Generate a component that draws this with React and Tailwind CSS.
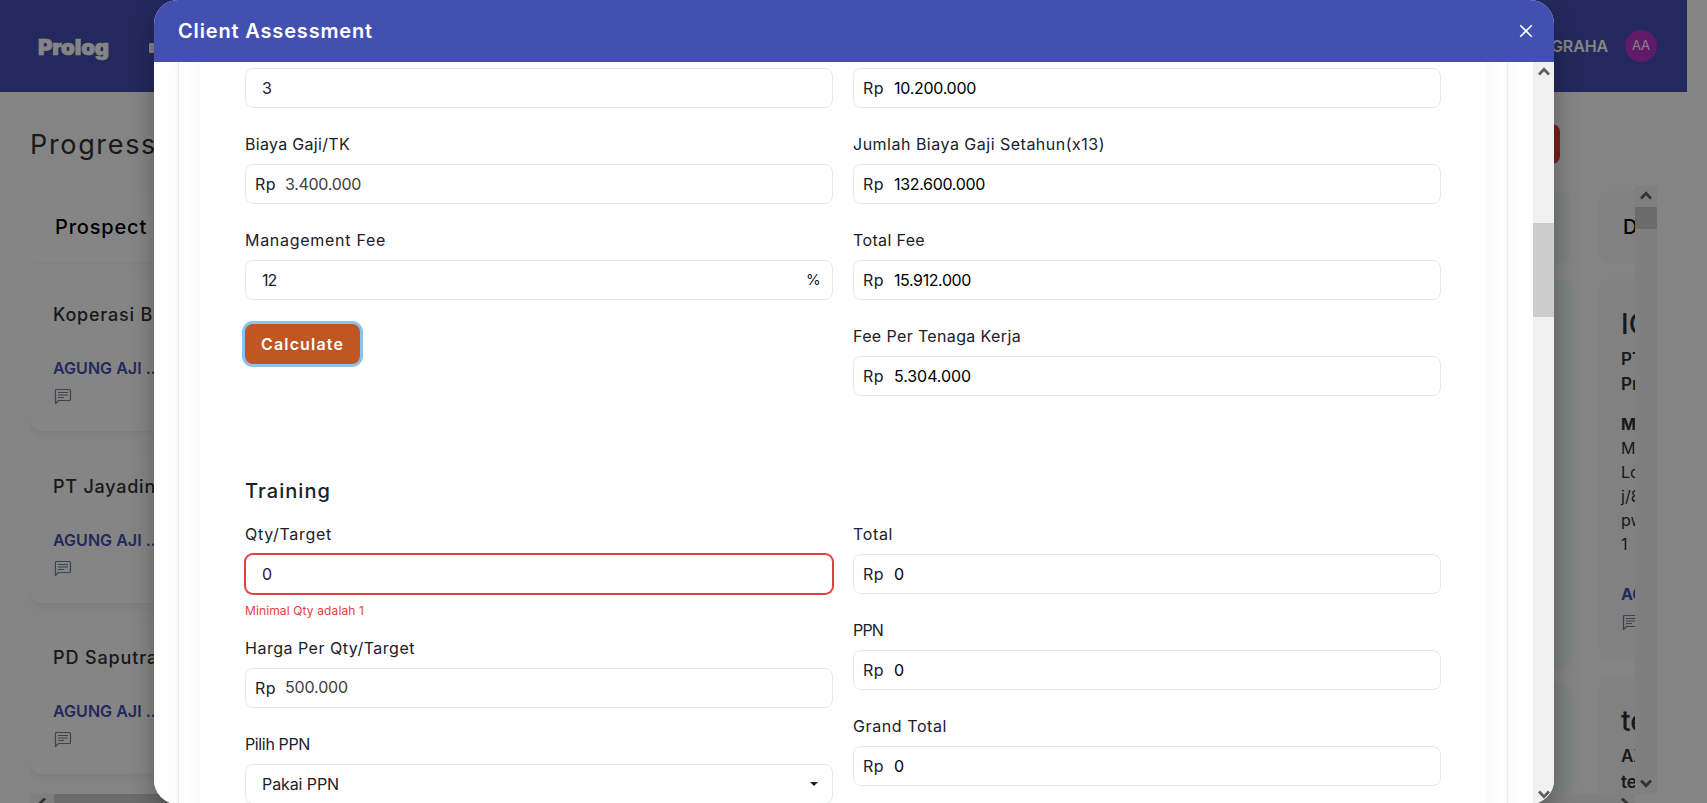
import React from "react";

const Tx = ({ w, className = "", children }) => (
  <span
    className={"inline-block whitespace-nowrap " + className}
    ref={(el) => {
      if (!el || !w) return;
      el.style.letterSpacing = "0px";
      const n = el.textContent.length;
      const natural = el.getBoundingClientRect().width;
      el.style.letterSpacing = (w - natural) / n + "px";
    }}
  >
    {children}
  </span>
);

const Chevron = ({ up, className = "" }) => (
  <svg viewBox="0 0 12 9" className={"h-[9px] w-3 " + className} fill="none" stroke="currentColor" strokeWidth="2.8">
    <path d={up ? "M1 7.5 6 2.2l5 5.3" : "M1 1.5 6 6.8l5-5.3"} />
  </svg>
);

const Comment = () => (
  <svg viewBox="0 0 18 17" className="h-[17px] w-[18px] shrink-0 text-[#718096]" fill="none" stroke="currentColor" strokeWidth="1.2">
    <path d="M1.5 15.5V2.5q0-1 1-1h13q1 0 1 1v9q0 1-1 1H4.5z" strokeLinejoin="round" />
    <path d="M4 4.5h10M4 7h10M4 9.5h6" />
  </svg>
);

const Box = ({ error, children }) => (
  <div
    className={
      "flex h-10 items-center rounded-lg border bg-white " +
      (error ? "border-[#e53e3e] shadow-[0_0_0_1px_#e53e3e]" : "border-[#e2e8f0]")
    }
  >
    {children}
  </div>
);

const Label = ({ w, children }) => (
  <div className="mb-2 h-6 leading-6">
    <Tx w={w}>{children}</Tx>
  </div>
);

const Money = ({ w, dark, children }) => (
  <Box>
    <span className="w-10 pl-[9px]"><Tx w={21}>Rp</Tx></span>
    <Tx w={w} className={dark ? "text-black" : "-ml-px pb-px text-[#404040]"}>{children}</Tx>
  </Box>
);

const Card = ({ title, w }) => (
  <div className="mb-[19.5px] h-[152px] rounded-[10px] bg-white pl-[22px] pt-[22px] shadow-[0_4px_6px_rgba(0,0,0,0.05)]">
    <div className="h-7 text-lg leading-7 font-medium text-[#303030]"><Tx w={w}>{title}</Tx></div>
    <div className="mt-[27px] h-6 font-semibold leading-6 text-[#4350b2]"><Tx w={103}>AGUNG AJI ..</Tx></div>
    <div className="mt-[8px] pl-px"><Comment /></div>
  </div>
);

export default function App() {
  return (
    <div className="relative h-[803px] w-[1707px] overflow-hidden bg-[#fdfdfd] font-['Inter','Liberation_Sans',sans-serif] text-base text-[#1a202c]">
      <header className="flex h-[92px] w-[1687px] items-center justify-between bg-[#4350b2] pl-[38px] pr-[30px] text-white">
        <div className="flex items-center">
          <span className="pt-[2px] text-[22px] font-black [-webkit-text-stroke:0.7px_white]"><Tx w={71}>Prolog</Tx></span>
          <span className="mt-1 ml-10 h-[10px] w-6 rounded-[1px] bg-white" />
        </div>
        <div className="flex items-center gap-[17px]">
          <span className="font-semibold"><Tx w={57}>GRAHA</Tx></span>
          <span className="flex h-8 w-8 items-center justify-center rounded-full bg-[#b832c8] text-[13px]">AA</span>
        </div>
      </header>

      <div className="flex h-[94px] items-center justify-between pl-[30px] pr-[147px] pt-[10px]">
        <h1 className="pt-[2px] text-[27px] text-[#303030]"><Tx w={127}>Progress</Tx></h1>
        <span className="h-10 w-32 rounded-lg bg-[#e53e3e]" />
      </div>

      <div className="ml-[30px] w-[1627px]">
        <div className="flex h-[608px]">
          <div className="flex w-[1605px] overflow-hidden pl-px pt-[5px]">
            <div className="w-[350px] shrink-0">
              <div className="mb-4 flex h-[72px] items-center rounded-[10px] bg-white pl-6 text-xl font-medium text-black shadow-[0_1px_2px_rgba(0,0,0,0.03)]"><Tx w={92}>Prospect</Tx></div>
              <Card title="Koperasi B" w={100} />
              <Card title="PT Jayadin" w={103} />
              <Card title="PD Saputra" w={105} />
            </div>
            <div className="ml-auto w-[352px] shrink-0">
              <div className="mb-4 h-[72px] rounded-[10px] bg-[#f0faf6] shadow-[0_1px_2px_rgba(0,0,0,0.03)]" />
              <div className="mb-[18px] h-[385px] rounded-[10px] bg-[#ebfbf5] shadow-[0_4px_6px_rgba(0,0,0,0.05)]" />
              <div className="h-[200px] rounded-[10px] bg-[#ebfbf5] shadow-[0_4px_6px_rgba(0,0,0,0.05)]" />
            </div>
            <div className="ml-[29px] w-9 shrink-0 overflow-hidden whitespace-nowrap text-[#303030]">
              <div className="mb-4 flex h-[72px] items-center rounded-l-[10px] bg-[#f8f8f8] pl-6 text-xl font-medium text-black">Deal</div>
              <div className="mb-[18px] h-[380px] rounded-l-[10px] bg-[#f8f8f8] pl-[22px] pt-[25px]">
                <div className="h-10 text-[28px] font-medium leading-10">IGD</div>
                <div className="mt-[3px] text-[17px] font-semibold leading-[25px]">PT<br />Pro</div>
                <div className="mt-[15px] leading-6"><b className="font-bold">Ma</b><br />Ma<br />Lo<br />j/8<br />pw<br />1</div>
                <div className="mt-[26px] font-bold leading-6 text-[#4350b2]">AG</div>
                <div className="mt-[8px] pl-px"><Comment /></div>
              </div>
              <div className="h-[200px] rounded-l-[10px] bg-[#f8f8f8] pl-[22px] pt-[24px]">
                <div className="h-10 text-[28px] font-medium leading-10">te</div>
                <div className="mt-[2px] text-[17px] font-semibold leading-[26px]">AX<br />te</div>
              </div>
            </div>
          </div>
          <div className="flex w-[22px] flex-col items-center bg-[#f4f4f4] text-[#606060]">
            <Chevron up className="mt-[5px] mb-[7px] shrink-0" />
            <div className="h-[22px] w-full bg-[#cdcdcd]" />
            <Chevron className="mt-auto mb-[6px]" />
          </div>
        </div>
        <div className="flex h-[22px] w-[1605px] justify-between bg-[#f4f4f4] text-[#606060]">
          <span className="pl-[6px] pt-[5px]"><Chevron className="rotate-90" /></span>
          <div className="mr-auto ml-[6px] w-[700px] bg-[#cdcdcd]" />
          <span className="pr-1 pt-[5px]"><Chevron className="-rotate-90" /></span>
        </div>
      </div>

      <div className="absolute inset-0 flex bg-black/48 pl-[154px]">
        <section className="flex h-[804px] w-[1400px] shrink-0 flex-col overflow-hidden rounded-3xl bg-white shadow-[0_10px_25px_rgba(0,0,0,0.3)]">
          <div className="flex h-[62px] shrink-0 items-center justify-between bg-[#4350b2] pl-6 pr-[21px] text-white">
            <h2 className="text-xl font-semibold"><Tx w={195}>Client Assessment</Tx></h2>
            <svg viewBox="0 0 14 14" className="h-[14px] w-[14px]" stroke="currentColor" strokeWidth="1.6"><path d="M1.2 1.2l11.6 11.6M12.8 1.2 1.2 12.8" /></svg>
          </div>
          <div className="flex min-h-0 flex-1">
            <div className="flex-1 overflow-hidden bg-white pl-[25px] pr-[26px]">
              <div className="-mt-5 h-[800px] bg-white px-[21px] shadow-[0_0_2px_rgba(0,0,0,0.2),0_0_24px_rgba(0,0,0,0.04)]">
                <div className="flex h-full gap-5 bg-white pl-[45px] pt-[26px] shadow-[0_0_20px_rgba(0,0,0,0.05)]">
                  <div className="w-[588px] shrink-0">
                    <Box><span className="pl-4">3</span></Box>
                    <div className="mt-6"><Label w={105}>Biaya Gaji/TK</Label><Money w={76}>3.400.000</Money></div>
                    <div className="mt-6">
                      <Label w={141}>Management Fee</Label>
                      <Box><span className="flex-1 pl-4"><Tx w={14}>12</Tx></span><span className="pr-[14px] text-[15px]"><Tx w={12}>%</Tx></span></Box>
                    </div>
                    <button className="mt-6 block h-10 w-[115px] rounded-lg bg-[#c05621] font-semibold text-white shadow-[0_0_0_3px_#8bc2ee]"><Tx w={83}>Calculate</Tx></button>
                    <h3 className="mt-[112px] mb-4 h-[30px] text-xl font-medium leading-[30px]"><Tx w={86}>Training</Tx></h3>
                    <Label w={87}>Qty/Target</Label>
                    <Box error><span className="pl-4">0</span></Box>
                    <div className="mt-2 h-[17.6px] text-xs leading-[18px] text-[#e53e3e]"><Tx w={119}>Minimal Qty adalah 1</Tx></div>
                    <div className="mt-4"><Label w={170}>Harga Per Qty/Target</Label><Money w={63}>500.000</Money></div>
                    <div className="mt-6">
                      <Label w={65}>Pilih PPN</Label>
                      <Box>
                        <span className="flex-1 pl-4"><Tx w={77}>Pakai PPN</Tx></span>
                        <svg viewBox="0 0 8 4" className="mr-[14px] h-1 w-2" fill="currentColor"><path d="M0 0h8L4 4z" /></svg>
                      </Box>
                    </div>
                  </div>
                  <div className="w-[588px] shrink-0">
                    <Money dark w={82}>10.200.000</Money>
                    <div className="mt-6"><Label w={252}>Jumlah Biaya Gaji Setahun(x13)</Label><Money dark w={91}>132.600.000</Money></div>
                    <div className="mt-6"><Label w={72}>Total Fee</Label><Money dark w={77}>15.912.000</Money></div>
                    <div className="mt-6"><Label w={168}>Fee Per Tenaga Kerja</Label><Money dark w={77}>5.304.000</Money></div>
                    <div className="mt-[126px]"><Label w={40}>Total</Label><Money dark>0</Money></div>
                    <div className="mt-6"><Label w={30}>PPN</Label><Money dark>0</Money></div>
                    <div className="mt-6"><Label w={94}>Grand Total</Label><Money dark>0</Money></div>
                  </div>
                </div>
              </div>
            </div>
            <div className="flex w-[21px] flex-col items-center bg-[#f0f0f0] text-[#606060]">
              <Chevron up className="mt-[5px] shrink-0" />
              <div className="mt-[147px] h-[94px] w-full bg-[#cdcdcd]" />
              <Chevron className="mt-auto mb-[5px]" />
            </div>
          </div>
        </section>
      </div>
    </div>
  );
}
